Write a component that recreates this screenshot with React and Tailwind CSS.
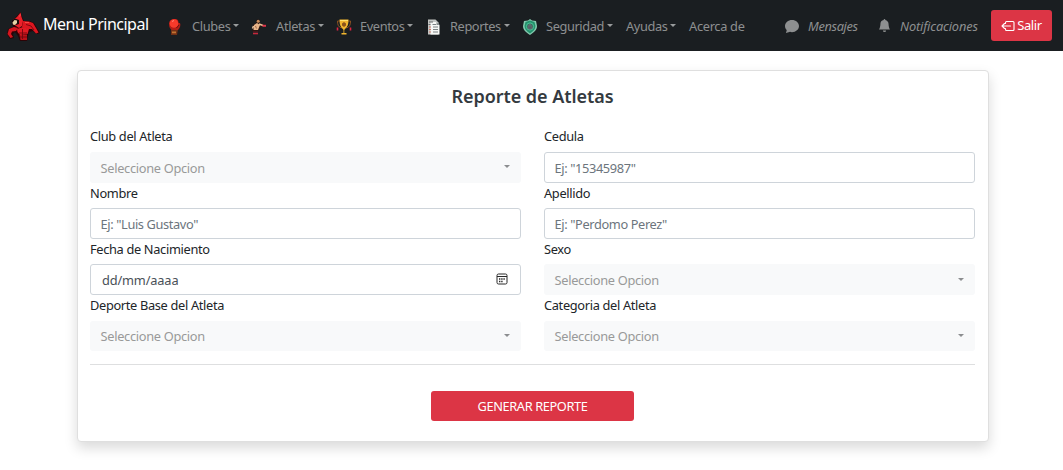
import React from "react";
import { BsChatFill, BsBellFill } from "react-icons/bs";

function CardinalLogo() {
  return (
    <svg viewBox="0 0 34 30" className="h-[30px] w-[34px] shrink-0">
      <path d="M5 9 9 5 13.500 0 15 5 17 9 23 9 27 11 30 16 33 21 30 22 26 19 22 20 21 24 20 29 13 29 11 24 8 20 6 22 7 26 3 27 0 22 1 17 6 15Z" fill="#2b0306" />
      <path d="M6 8 10 5 13.500 0.500 14.500 5 16 9 15 14 12 16 9 14 6 12Z" fill="#ea2029" />
      <path d="M5 8.500 8 6.500 12 8 12 12 9 13 6 12Z" fill="#1b0b0b" />
      <path d="M5.500 10.500 7.500 8 10 8.500 10 11 8 13 6 12.500Z" fill="#e6d6a8" />
      <path d="M16 9 22 9.500 26 11 29 16 31.500 20.500 29 21.500 25 17 20 17 15 15Z" fill="#dd161f" />
      <path d="M2 17 7 15 11 16 9 19 5 19.500 4 22 6 25 3.500 26 0.500 22Z" fill="#d5161f" />
      <path d="M10 17 16 15 22 17 20.500 22 13 23 10.500 20Z" fill="#e01a23" />
      <path d="M12.500 23 20 22.500 20 28 13.500 28Z" fill="#bb1119" />
      <path d="M15.500 17v10M12 21h8M13 25h7M19 12.500l5 1.500 3 4" fill="none" stroke="#70080d" strokeWidth=".9" />
      <path d="M12.500 4.500l1-2M18 10.500h4" stroke="#ff5650" fill="none" strokeWidth=".8" />
    </svg>
  );
}

function Glove() {
  return (
    <svg viewBox="0 0 16 18" className="h-[18px] w-4">
      <path d="M4 11h7l-1 6H4Z" fill="#713015" />
      <path d="M5 13.500h4v1.800H5Z" fill="#c17433" />
      <path d="M2 6C2 2 5 1 8 1c3 0 3.500 2 3.500 4L13 5c1 2 0 5-2 7H5C3 11 2 9 2 6Z" fill="#b31e17" />
      <circle cx="7" cy="5.500" r="4.300" fill="#f73a2b" />
      <path d="M5 3.500l2-1" stroke="#ff8879" />
      <path d="M9.500 10l2.500-3" stroke="#69110c" />
    </svg>
  );
}

function Boxer() {
  return (
    <svg viewBox="0 0 16 18" className="h-[18px] w-4">
      <path d="M2 7 5 5 6 1.500 9 2 8.500 5 11 6 15 7V9L10 9 7 13H1Z" fill="#2a1712" />
      <path d="M3 7 6 5 9 7 7 12 2.500 12Z" fill="#e8b488" />
      <path d="M8 6 12 7.500" stroke="#edc39b" strokeWidth="1.600" />
      <circle cx="7.200" cy="3.200" r="1.500" fill="#c98c5c" />
      <path d="M2.500 8 1.500 10.500" stroke="#f0c7a1" strokeWidth="1.500" />
      <path d="M4.500 8l1 2.500" stroke="#8b5638" strokeWidth=".8" />
      <path d="M11.500 7.800h3.500" stroke="#db344b" strokeWidth="2" />
      <path d="M2 15.500h5" stroke="#c6283c" strokeWidth="1.600" />
      <path d="M2 13.500h5" stroke="#46161b" />
    </svg>
  );
}

function Trophy() {
  return (
    <svg viewBox="0 0 16 18" className="h-[18px] w-4">
      <path d="M4 3H1.500c0 4 1 6 4 7M12 3h2.500c0 4-1 6-4 7" fill="none" stroke="#8d5321" strokeWidth="1" />
      <path d="M3.500 1.500h9c0 5-1 8-3.500 9.500l-.7 1V15H10.500v1.500h-5V15h2v-3l-.7-1C4.500 9.500 3.500 6.500 3.500 1.500Z" fill="#f1b52e" />
      <path d="M6 5.500 8 4l2 1.500v2L8 9 6 7.500Z" fill="#8d541b" />
      <path d="M4 2.500h8" stroke="#ffe06d" />
      <path d="M1.500 9.500v3M14.500 9.500v3" stroke="#df2444" strokeWidth="1.600" />
    </svg>
  );
}

function Papers() {
  return (
    <svg viewBox="0 0 16 18" className="h-[18px] w-4">
      <path d="M2 1.500h7.500l3 3v12H2Z" fill="#c3c5c3" />
      <path d="M4.500 4h6l3 3v9.500h-9Z" fill="#f7f7f5" />
      <path d="M10.500 4v3h3" fill="#858b8b" />
      <path d="M6.500 6.500h3.500M7 9h5M7 11.500h5M7 14h5" stroke="#7b8182" />
      <path d="M3 4h4M2.500 6.500h2" stroke="#66696b" />
      <path d="M3 9h2M3 11.500h2M3 14h2" stroke="#cd7767" />
    </svg>
  );
}

function Shield() {
  return (
    <svg viewBox="0 0 16 18" className="h-[18px] w-4">
      <path d="M8 1 10 2.500 14 3 15 8C15 12 12 14.500 8 17 4 14.500 1 12 1 8L2 3 6 2.500Z" fill="#83c9ae" />
      <path d="M8 2.500 12.500 4l1 4c0 3-2 5-5.500 7.500C4.500 13 2.500 11 2.500 8l1-4Z" fill="#23916c" />
      <circle cx="8" cy="8.500" r="3.600" fill="#356b5c" stroke="#48c798" />
      <path d="M6 8h4v3H6ZM7 8V6.500h2V8" fill="#555e63" stroke="#697379" strokeWidth=".6" />
    </svg>
  );
}

function ExitIcon() {
  return (
    <svg viewBox="0 0 14 12" className="mr-[2px] h-3 w-[14px] shrink-0" fill="none" stroke="currentColor" strokeWidth="1.100" strokeLinecap="round" strokeLinejoin="round">
      <path d="M4.500 3.500V2.500a1 1 0 0 1 1-1h6.500a1 1 0 0 1 1 1v7a1 1 0 0 1-1 1H5.500a1 1 0 0 1-1-1V8.500" />
      <path d="M9.500 6H1M3.500 3.500 1 6l2.500 2.500" />
    </svg>
  );
}

function Caret() {
  return <span className="mb-[3px] ml-[3px] h-0 w-0 shrink-0 border-x-[3.5px] border-t-[3.5px] border-x-transparent border-t-[#999c9d]" />;
}

function NavItem({ icon, label, width, gap, caret = true, tracking = "tracking-[-0.3px]" }) {
  return (
    <a className={`flex h-8 shrink-0 items-center ${width}`}>
      {icon && <span className={`flex shrink-0 ${gap}`}>{icon}</span>}
      <span className={`whitespace-nowrap ${tracking}`}>{label}</span>
      {caret && <Caret />}
    </a>
  );
}

function Field({ label, children }) {
  return (
    <div className="h-[56.2px]">
      <label className="block h-[19.2px] pt-px text-[12.8px] leading-[19.2px] tracking-[-0.33px]">{label}</label>
      <div className="mt-[6.4px]">{children}</div>
    </div>
  );
}

function SelectBox() {
  return (
    <button className="flex h-[30.6px] w-full items-center justify-between rounded-[3px] bg-[#f8f9fa] pt-px pr-[11px] pl-[10.5px] text-left text-[12.8px] tracking-[-0.3px] text-[#999]">
      <span className="pt-px">Seleccione Opcion</span>
      <span className="mb-[2px] h-0 w-0 border-x-[3px] border-t-[3px] border-x-transparent border-t-[#8b8d8f]" />
    </button>
  );
}

function Input({ placeholder }) {
  return (
    <input
      placeholder={placeholder}
      className="block h-[30.6px] w-full rounded-[3px] border border-[#ced4da] bg-white px-[9.5px] pt-px text-[12.8px] tracking-[-0.37px] placeholder:text-[#6c757d]"
    />
  );
}

function DateBox() {
  return (
    <div className="flex h-[30.6px] w-full items-center justify-between rounded-[3px] border border-[#ced4da] bg-white pr-[12px] pl-[11px] text-[12.8px] text-[#495057]">
      <span className="pt-[2px] tracking-[-0.15px]">dd/mm/aaaa</span>
      <svg viewBox="0 0 12 12" className="mb-px h-3 w-3" fill="none" stroke="#282828">
        <rect x="1" y="1" width="10" height="10" rx="1.500" />
        <path d="M1 3.500h10" />
        <path d="M3 6h6M3 8.500h4" strokeWidth="1.300" strokeDasharray="1.400 .8" />
      </svg>
    </div>
  );
}

export default function App() {
  return (
    <div className="h-[470px] overflow-hidden bg-white font-['Noto_Sans',sans-serif] text-[#212529]">
      <nav className="flex h-[51px] items-center bg-[#1a1e21] pl-[7px] text-[12.8px] text-[#8d8f90]">
        <a className="flex w-[160px] shrink-0 items-center pt-[2px] text-white">
          <CardinalLogo />
          <span className="-mt-[5px] ml-[2px] text-[16px] tracking-[-0.5px] whitespace-nowrap">Menu Principal</span>
        </a>
        <div className="flex flex-1 items-center pt-[2px]">
          <NavItem icon={<Glove />} label="Clubes" width="w-[84px]" gap="mr-[9px]" tracking="tracking-[-0.35px]" />
          <NavItem icon={<Boxer />} label="Atletas" width="w-[85px]" gap="mr-[9px]" />
          <NavItem icon={<Trophy />} label="Eventos" width="w-[90px]" gap="mr-[8px]" tracking="tracking-[-0.4px]" />
          <NavItem icon={<Papers />} label="Reportes" width="w-[96px]" gap="mr-[8px]" tracking="tracking-[-0.4px]" />
          <NavItem icon={<Shield />} label="Seguridad" width="w-[104px]" gap="mr-[8px]" tracking="tracking-[-0.4px]" />
          <NavItem label="Ayudas" width="w-[63px]" tracking="tracking-[-0.4px]" />
          <NavItem label="Acerca de" width="w-[96px]" caret={false} />
          <a className="flex w-[93px] shrink-0 items-center italic">
            <BsChatFill className="mr-[9px] mb-px h-[14px] w-[14px] shrink-0" />
            <span className="tracking-[-0.35px]">Mensajes</span>
          </a>
          <a className="flex w-[113px] shrink-0 items-center italic">
            <BsBellFill className="mr-[8px] mb-[2px] h-[13px] w-[13px] shrink-0" />
            <span className="ml-px tracking-[-0.15px]">Notificaciones</span>
          </a>
          <button className="-mt-[2px] flex h-[31px] w-[61px] shrink-0 items-center justify-center rounded-[3px] bg-[#dc3545] text-[13px] tracking-[-0.4px] text-white">
            <ExitIcon />
            Salir
          </button>
        </div>
      </nav>

      <main className="mt-[19px] ml-[77px] h-[372px] w-[912px] rounded-[4px] border border-[#dfdfdf] bg-white pr-[13px] pl-[12px] shadow-[0_6px_13px_rgba(0,0,0,0.15)]">
        <h1 className="pt-[11px] text-center text-[18px] leading-[28px] font-semibold tracking-[-0.05px] text-[#343a40]">
          Reporte de Atletas
        </h1>
        <form className="mt-[16.4px] grid grid-cols-2 gap-x-[23px]">
          <Field label="Club del Atleta"><SelectBox /></Field>
          <Field label="Cedula"><Input placeholder={'Ej: "15345987"'} /></Field>
          <Field label="Nombre"><Input placeholder={'Ej: "Luis Gustavo"'} /></Field>
          <Field label="Apellido"><Input placeholder={'Ej: "Perdomo Perez"'} /></Field>
          <Field label="Fecha de Nacimiento"><DateBox /></Field>
          <Field label="Sexo"><SelectBox /></Field>
          <Field label="Deporte Base del Atleta"><SelectBox /></Field>
          <Field label="Categoria del Atleta"><SelectBox /></Field>
        </form>
        <hr className="mt-[12.8px] border-[#dedfe0]" />
        <div className="mt-[26px] flex justify-center">
          <button className="h-[30px] w-[203px] rounded-[3px] bg-[#dc3545] pt-px text-[12.8px] tracking-[-0.38px] text-white">GENERAR REPORTE</button>
        </div>
      </main>
    </div>
  );
}
